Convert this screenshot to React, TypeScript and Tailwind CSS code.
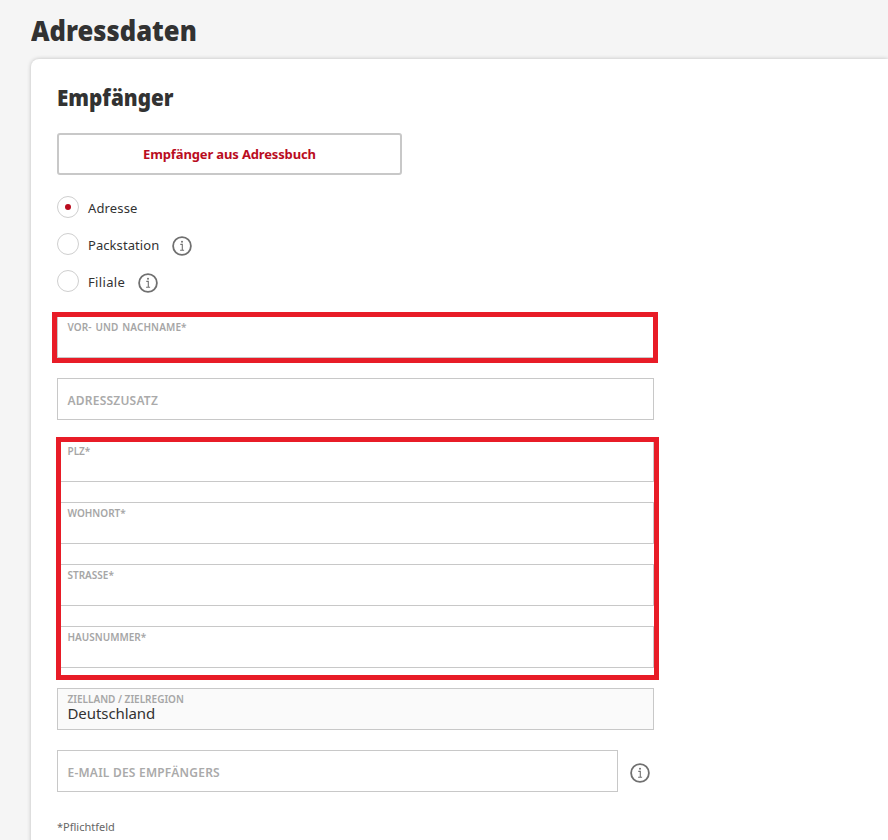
import React from 'react';

type FieldProps = {
  label: string;
  value?: string;
  size?: 'small' | 'large';
  className?: string;
  labelClassName?: string;
};

const InfoIcon = ({ className = '' }) => (
  <svg viewBox="0 0 20 20" className={`w-5 h-5 shrink-0 ${className}`} fill="none" stroke="#707070">
    <circle cx="10" cy="10" r="8.9" strokeWidth="1.8" />
    <path d="M8.3 8.4h2v5.8M8.1 14.3h4" strokeWidth="1.1" />
    <circle cx="10" cy="5.8" r="1" fill="#707070" stroke="none" />
  </svg>
);

const Radio = ({ label, checked = false, info = false, labelClassName = '' }) => (
  <div className="h-[22px] flex items-center">
    <span className="w-[22px] h-[22px] rounded-full border border-[#cfcfcf] flex items-center justify-center">
      {checked && <span className="w-1.5 h-1.5 rounded-full bg-[#ba0c1e]" />}
    </span>
    <span className={`ml-[9px] mt-px text-[13px] leading-5 text-[#323232] ${labelClassName}`}>
      {label}
    </span>
    {info && <InfoIcon className="ml-[12.5px] mt-[3px]" />}
  </div>
);

const Field = ({ label, value, size = 'small', className = '', labelClassName = '' }: FieldProps) => (
  <div className={`h-[42px] border border-[#c8c8c8] pl-[9.5px] ${className}`}>
    {size === 'large' ? (
      <div className={`pt-[14px] text-[12px] leading-4 font-semibold text-[#aaaaaa] tracking-[0.22px] ${labelClassName}`}>
        {label}
      </div>
    ) : (
      <div className={`pt-1 text-[10px] leading-3 font-semibold text-[#a6a6a6] ${labelClassName}`}>
        {label}
      </div>
    )}
    {value && (
      <div className="text-[15px] leading-[17px] text-[#323232] tracking-[-0.08px]">{value}</div>
    )}
  </div>
);

const App = () => (
  <div className="h-[840px] overflow-hidden bg-[#f5f5f5] pl-[31px] font-['Noto_Sans',sans-serif] whitespace-nowrap">
    <h1 className="h-[59px] pt-[12px] text-[28px] leading-9 font-black text-[#323232] origin-left scale-x-[0.913]">
      Adressdaten
    </h1>
    <div className="relative h-[800px] bg-white rounded-tl-lg shadow-[0_0_4px_rgba(0,0,0,0.22)] pl-[26px] pt-[22px]">
      <h2 className="h-[52px] text-[23px] leading-8 font-black text-[#323232] origin-left scale-x-[0.9]">
        Empfänger
      </h2>
      <button className="block w-[345px] h-[42px] pt-0.5 border-2 border-[#c8c8c8] rounded-[3px] text-[13px] font-bold text-[#ba0c1e] tracking-[-0.14px]">
        Empfänger aus Adressbuch
      </button>

      <div className="mt-[21px] flex flex-col gap-[15px]">
        <Radio label="Adresse" checked labelClassName="tracking-[0.15px]" />
        <Radio label="Packstation" info labelClassName="tracking-[0.07px]" />
        <Radio label="Filiale" info labelClassName="tracking-[0.35px]" />
      </div>

      <div className="mt-6 w-[597px] flex flex-col gap-5">
        <Field label="VOR- UND NACHNAME*" labelClassName="tracking-[0.12px] [word-spacing:1px]" />
        <Field label="ADRESSZUSATZ" size="large" />
        <Field label="PLZ*" />
        <Field label="WOHNORT*" />
        <Field label="STRASSE*" />
        <Field label="HAUSNUMMER*" />
        <Field label="ZIELLAND / ZIELREGION" value="Deutschland" className="bg-[#fafafa]" />
        <div className="flex items-center">
          <Field label="E-MAIL DES EMPFÄNGERS" size="large" className="w-[561px]" />
          <InfoIcon className="ml-3 mt-1" />
        </div>
      </div>
      <p className="mt-[27px] text-[11px] leading-4 text-[#666666]">*Pflichtfeld</p>

      {/* markers around the required fields */}
      <div className="absolute left-[21px] top-[253px] w-[606px] h-[51px] border-[5px] border-[#e81c27]" />
      <div className="absolute left-[25px] top-[378px] w-[603px] h-[243px] border-[5px] border-[#e81c27]" />
    </div>
  </div>
);

export default App;
